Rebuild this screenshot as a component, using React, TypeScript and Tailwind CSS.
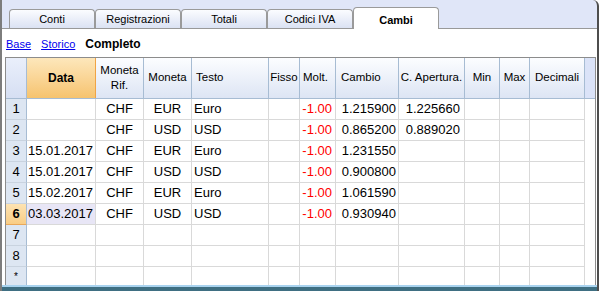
import React from 'react';

type Row = {
  n: string;
  data?: string;
  rif?: string;
  moneta?: string;
  testo?: string;
  molt?: string;
  cambio?: string;
  apertura?: string;
};

const rows: Row[] = [
  { n: '1', rif: 'CHF', moneta: 'EUR', testo: 'Euro', molt: '-1.00', cambio: '1.215900', apertura: '1.225660' },
  { n: '2', rif: 'CHF', moneta: 'USD', testo: 'USD', molt: '-1.00', cambio: '0.865200', apertura: '0.889020' },
  { n: '3', data: '15.01.2017', rif: 'CHF', moneta: 'EUR', testo: 'Euro', molt: '-1.00', cambio: '1.231550' },
  { n: '4', data: '15.01.2017', rif: 'CHF', moneta: 'USD', testo: 'USD', molt: '-1.00', cambio: '0.900800' },
  { n: '5', data: '15.02.2017', rif: 'CHF', moneta: 'EUR', testo: 'Euro', molt: '-1.00', cambio: '1.061590' },
  { n: '6', data: '03.03.2017', rif: 'CHF', moneta: 'USD', testo: 'USD', molt: '-1.00', cambio: '0.930940' },
  { n: '7' },
  { n: '8' },
  { n: '*' },
];

const tabs = ['Conti', 'Registrazioni', 'Totali', 'Codici IVA', 'Cambi'];

const hCell = 'h-full flex items-center border-r border-[#a7bcd3] bg-gradient-to-b from-[#fcfdff] to-[#dde5f4] text-[11.5px] text-black';
const cell = 'h-full flex items-center border-r border-[#d9d9d9] overflow-hidden whitespace-nowrap';

const App: React.FC = () => {
  return (
    <div className="w-[599px] h-[291px] flex flex-col bg-[#e0e6f8] border-l-2 border-r-2 border-l-[#7d7d7d] border-r-[#4e4e4e] rounded-tr-[6px] overflow-hidden font-['Liberation_Sans',Arial,sans-serif]">
      {/* tab strip */}
      <div className="h-[29px] flex items-end pl-[7px] border-b border-[#999999]">
        {tabs.map((t) =>
          t === 'Cambi' ? (
            <div
              key={t}
              className="relative z-10 -mb-px w-[86px] h-[22px] flex items-start justify-center pt-[4px] bg-white border border-b-0 border-[#9a9a9a] rounded-t-[4px] text-[11px] font-bold text-black"
            >
              {t}
            </div>
          ) : (
            <div
              key={t}
              className="w-[86px] h-[19px] flex items-center justify-center bg-gradient-to-b from-[#fbfcff] to-[#dbe2f3] border border-b-0 border-[#9a9a9a] rounded-t-[4px] text-[11px] text-black"
            >
              {t}
            </div>
          )
        )}
      </div>

      {/* content */}
      <div className="flex-1 bg-white flex flex-col overflow-hidden">
        <div className="h-[28px] flex items-center pl-[4px] pt-[2px] gap-[10px] text-[11px]">
          <span className="text-[#0000ee] underline">Base</span>
          <span className="text-[#0000ee] underline">Storico</span>
          <span className="text-[12px] font-bold text-black">Completo</span>
        </div>

        <div className="ml-[3px] w-[591px] flex-1 border-l border-t border-r border-[#8c8c8c] overflow-hidden">
          {/* header */}
          <div className="h-[41px] flex border-b border-[#a7bcd3]">
            <div className="w-[21px] h-full border-r border-[#a7bcd3] bg-gradient-to-b from-[#eaeffb] to-[#d6dff3]" />
            <div className="w-[69px] h-full flex items-center justify-center border-r border-[#f0a445] bg-gradient-to-b from-[#fde7bb] to-[#f6c36e] text-[12px] font-bold text-black">
              Data
            </div>
            <div className={`${hCell} w-[48px] justify-center text-center leading-[15px]`}>
              Moneta
              <br />
              Rif.
            </div>
            <div className={`${hCell} w-[48px] justify-center`}>Moneta</div>
            <div className={`${hCell} w-[77px] pl-[4px]`}>Testo</div>
            <div className={`${hCell} w-[31px] justify-center`}>Fisso</div>
            <div className={`${hCell} w-[36px] pl-[3px]`}>Molt.</div>
            <div className={`${hCell} w-[63px] pl-[5px]`}>Cambio</div>
            <div className={`${hCell} w-[66px] justify-center`}>C. Apertura.</div>
            <div className={`${hCell} w-[35px] justify-center`}>Min</div>
            <div className={`${hCell} w-[30px] justify-center`}>Max</div>
            <div className={`${hCell} w-[55px] justify-center`}>Decimali</div>
            <div className="w-[10px] h-full bg-[#dbe3f8]" />
          </div>

          {/* rows */}
          {rows.map((r) => {
            const sel = r.n === '6';
            return (
              <div key={r.n} className="h-[21px] flex text-[13px] leading-[20px] text-black">
                <div
                  className={
                    sel
                      ? 'w-[21px] h-full flex items-center justify-center border-r border-b border-r-[#a7bcd3] border-b-[#e9a85a] bg-gradient-to-b from-[#fde3b2] to-[#f9cd85] font-bold'
                      : 'w-[21px] h-full flex items-center justify-center border-r border-b border-r-[#a7bcd3] border-b-[#c9d3df] bg-[#dde6f2]'
                  }
                >
                  {r.n === '*' ? <span className="text-[10px] leading-none">*</span> : r.n}
                </div>
                <div className="flex border-b border-[#d9d9d9] h-full">
                  <div className={`${cell} w-[69px] justify-end pr-[2px] ${sel ? 'bg-[#e8e6f6]' : ''}`}>{r.data}</div>
                  <div className={`${cell} w-[48px] justify-center`}>{r.rif}</div>
                  <div className={`${cell} w-[48px] justify-center`}>{r.moneta}</div>
                  <div className={`${cell} w-[77px] pl-[2px]`}>{r.testo}</div>
                  <div className={`${cell} w-[31px]`} />
                  <div className={`${cell} w-[36px] justify-end pr-[3px] text-[#ff0000]`}>{r.molt}</div>
                  <div className={`${cell} w-[63px] justify-end pr-[2px]`}>{r.cambio}</div>
                  <div className={`${cell} w-[66px] justify-end pr-[4px]`}>{r.apertura}</div>
                  <div className={`${cell} w-[35px]`} />
                  <div className={`${cell} w-[30px]`} />
                  <div className={`${cell} w-[55px]`} />
                </div>
              </div>
            );
          })}
        </div>
      </div>

      <div className="h-[2px] bg-[#a9d3ef]" />
      <div className="h-[4px] bg-[#3f6f82]" />
    </div>
  );
};

export default App;
